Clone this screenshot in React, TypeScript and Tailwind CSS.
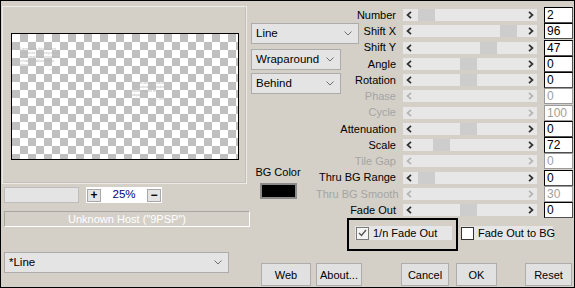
import React from 'react';

type Row = { label: string; value: string; pos?: number; disabled?: boolean };

const rows: Row[] = [
  { label: 'Number', value: '2', pos: 15 },
  { label: 'Shift X', value: '96', pos: 97 },
  { label: 'Shift Y', value: '47', pos: 77 },
  { label: 'Angle', value: '0', pos: 57 },
  { label: 'Rotation', value: '0', pos: 57 },
  { label: 'Phase', value: '0', disabled: true },
  { label: 'Cycle', value: '100', disabled: true },
  { label: 'Attenuation', value: '0', pos: 57 },
  { label: 'Scale', value: '72', pos: 30 },
  { label: 'Tile Gap', value: '0', disabled: true },
  { label: 'Thru BG Range', value: '0', pos: 15 },
  { label: 'Thru BG Smooth', value: '30', disabled: true },
  { label: 'Fade Out', value: '0', pos: 57 },
];

const Chevron = () => (
  <svg width="8" height="5" viewBox="0 0 8 5" className="shrink-0">
    <polyline points="0.5,0.5 4,4 7.5,0.5" fill="none" stroke="#707070" strokeWidth="1" />
  </svg>
);

const Arrow = ({ dir, disabled }: { dir: 'l' | 'r'; disabled?: boolean }) => (
  <svg width="6" height="8" viewBox="0 0 6 8">
    <polyline
      points={dir === 'l' ? '5,0.8 1.5,4 5,7.2' : '1,0.8 4.5,4 1,7.2'}
      fill="none"
      stroke={disabled ? '#b4b4b4' : '#303030'}
      strokeWidth="1.7"
    />
  </svg>
);

const Dropdown = ({ label, width, className = '' }: { label: string; width: string; className?: string }) => (
  <div className={`${width} ${className} h-[21px] bg-[#e4e4e4] border border-[#acacac] flex items-center justify-between pl-[4px] pr-[6px] text-[11.5px] text-black`}>
    <span>{label}</span>
    <Chevron />
  </div>
);

const Button = ({ label, className }: { label: string; className: string }) => (
  <button className={`${className} h-[23px] bg-[#e1e1e1] border border-[#adadad] text-[11px] text-black shrink-0`}>{label}</button>
);

export default function App() {
  return (
    <div className="w-[575px] h-[288px] border border-black bg-[#d4d0c8] flex font-['Liberation_Sans',Arial,sans-serif] overflow-hidden">
      {/* Left column: preview */}
      <div className="w-[250px] shrink-0 flex flex-col pl-[1px] pt-[5px]">
        <div className="w-[245px] h-[178px] border border-[#ecebe7] shadow-[inset_-1px_-1px_0_#c4c0b8] pl-[8px] pt-[26px]">
          <div className="relative w-[228px] h-[127px] border border-black bg-[conic-gradient(#c0c0c0_25%,#ffffff_0_50%,#c0c0c0_0_75%,#ffffff_0)] bg-[length:16px_16px] overflow-hidden">
            <div className="absolute left-[8px] top-[13px] w-[42px] text-[3px] leading-[4px] text-[#b8b8b8] blur-[0.3px]">
              Lorem ipsum dolor sit amet consectetur adipiscing elit sed do eiusmod tempor incididunt ut labore et dolore magna aliqua
              <div className="text-right pr-[4px]">— text</div>
            </div>
            <div className="absolute left-[120px] top-[47px] w-[36px] text-[3px] leading-[4px] text-[#b8b8b8] blur-[0.3px]">
              Ut enim ad minim veniam quis nostrud exercitation ullamco laboris nisi ut aliquip
              <div className="text-right pr-[4px]">— text</div>
            </div>
          </div>
        </div>

        <div className="flex items-center mt-[3px] pl-[2px]">
          <div className="w-[75px] h-[16px] bg-[#e4e4e4] border border-[#bdbdbd]" />
          <div className="ml-[7px] w-[76px] h-[16px] bg-white flex items-center justify-between px-[1px]">
            <div className="w-[14px] h-[13px] bg-[#e4e4e4] border border-[#a8a8a8] flex items-center justify-center text-[12px] leading-none font-bold text-black">+</div>
            <span className="text-[11.5px] text-[#000080]">25%</span>
            <div className="w-[14px] h-[13px] bg-[#e4e4e4] border border-[#a8a8a8] flex items-center justify-center text-[12px] leading-none font-bold text-black">−</div>
          </div>
        </div>

        <div className="ml-[2px] mt-[8px] w-[246px] h-[16px] border border-[#a8a6a0] border-r-white border-b-white flex items-center justify-center text-[11px] text-white">
          Unknown Host ("9PSP")
        </div>

        <Dropdown label="*Line" width="w-[225px]" className="ml-[2px] mt-[25px]" />
      </div>

      {/* Middle and right */}
      <div className="flex-1 flex flex-col">
        <div className="flex">
          <div className="w-[65px] shrink-0 flex flex-col pt-[22px]">
            <Dropdown label="Line" width="w-[108px]" />
            <Dropdown label="Wraparound" width="w-[90px]" className="mt-[5px]" />
            <Dropdown label="Behind" width="w-[90px]" className="mt-[3px]" />
            <div className="w-[54px] flex flex-col items-center mt-[72px]">
              <div className="h-[13px] leading-[13px] text-[11px] text-black whitespace-nowrap">BG Color</div>
              <div className="mt-[4px] w-[37px] h-[16px] bg-black border-2 border-[#8a8a8a]" />
            </div>
          </div>

          <div className="w-[257px] shrink-0 pt-[6px]">
            {rows.map((r) => (
              <div key={r.label} className="h-[16.25px] flex items-center">
                <div className={`w-[80px] text-right text-[11px] whitespace-nowrap ${r.disabled ? 'text-[#a4a4a4]' : 'text-black'}`}>{r.label}</div>
                <div className="relative ml-[7px] w-[134px] h-[12px] bg-[#e7e7e7] flex items-center justify-between px-[3px]">
                  <Arrow dir="l" disabled={r.disabled} />
                  {r.pos !== undefined && (
                    <div className="absolute top-0 h-[12px] w-[17px] bg-[#cdcdcd]" style={{ left: r.pos }} />
                  )}
                  <Arrow dir="r" disabled={r.disabled} />
                </div>
                <div className={`ml-[7px] w-[29px] h-[16px] bg-white border pl-[2px] text-[12px] leading-[14px] ${r.disabled ? 'border-[#9a9a9a] text-[#a0a0a0]' : 'border-[#505050] border-l-black border-t-black text-black'}`}>
                  {r.value}
                </div>
              </div>
            ))}
          </div>
        </div>

        <div className="flex items-start ml-[96px]">
          <div className="w-[111px] h-[33px] border-2 border-black pl-[6px] pt-[6px]">
            <div className="w-[97px] h-[14px] bg-[#e6e6e6] flex items-center">
              <div className="ml-[1px] w-[13px] h-[13px] bg-[#f4f4f4] border border-[#7a7a7a] flex items-center justify-center">
                <svg width="9" height="8" viewBox="0 0 9 8">
                  <polyline points="1,4 3.5,6.5 8,1" fill="none" stroke="#555" strokeWidth="1.4" />
                </svg>
              </div>
              <span className="ml-[4px] text-[11px] text-black whitespace-nowrap">1/n Fade Out</span>
            </div>
          </div>
          <div className="ml-[3px] mt-[8px] w-[92px] h-[14px] bg-[#e6e6e6] flex items-center">
            <div className="w-[13px] h-[13px] shrink-0 bg-white border border-[#333]" />
            <span className="ml-[4px] text-[11px] text-black whitespace-nowrap">Fade Out to BG</span>
          </div>
        </div>

        <div className="flex mt-[12px] ml-[10px]">
          <Button label="Web" className="w-[50px]" />
          <Button label="About..." className="ml-[5px] w-[46px]" />
          <Button label="Cancel" className="ml-[39px] w-[48px]" />
          <Button label="OK" className="ml-[7px] w-[41px]" />
          <Button label="Reset" className="ml-[28px] w-[47px]" />
        </div>
      </div>
    </div>
  );
}
